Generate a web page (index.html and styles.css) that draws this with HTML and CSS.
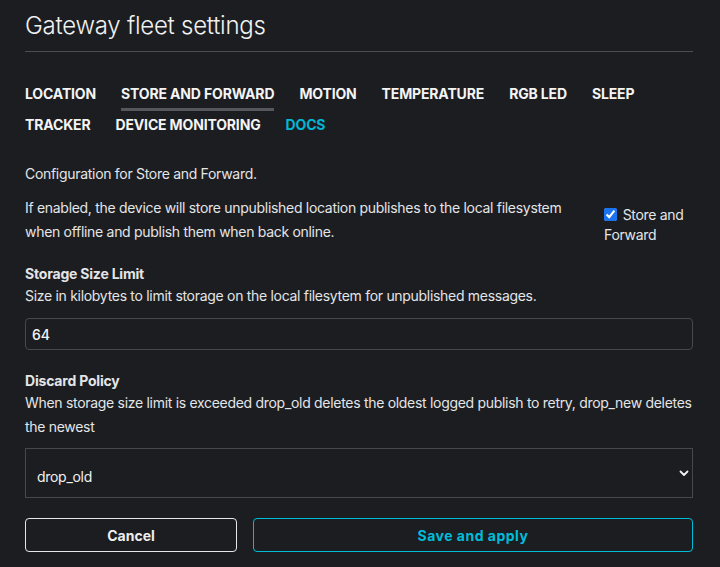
FILE: index.html
```html
<!DOCTYPE html>
<html lang="en">
<head>
<meta charset="utf-8">
<title>Gateway fleet settings</title>
<link rel="stylesheet" href="styles.css">
</head>
<body>
<div class="page">
  <h1 class="title">Gateway fleet settings</h1>
  <hr class="rule">
  <nav class="tabs">
    <span class="tab">Location</span>
    <span class="tab active">Store and Forward</span>
    <span class="tab">Motion</span>
    <span class="tab">Temperature</span>
    <span class="tab">RGB LED</span>
    <span class="tab">Sleep</span>
    <span class="tab">Tracker</span>
    <span class="tab">Device Monitoring</span>
    <span class="tab docs">Docs</span>
  </nav>
  <p class="intro">Configuration for Store and Forward.</p>
  <div class="enable-row">
    <p class="enable-text">If enabled, the device will store unpublished location publishes to the local filesystem when offline and publish them when back online.</p>
    <label class="check"><input type="checkbox" checked> Store and Forward</label>
  </div>
  <div class="field">
    <div class="field-label">Storage Size Limit</div>
    <div class="field-desc">Size in kilobytes to limit storage on the local filesytem for unpublished messages.</div>
    <input class="text-input" type="text" value="64">
  </div>
  <div class="field">
    <div class="field-label">Discard Policy</div>
    <div class="field-desc">When storage size limit is exceeded drop_old deletes the oldest logged publish to retry, drop_new deletes the newest</div>
    <div class="select-wrap">
      <select class="select">
        <option>drop_old</option>
        <option>drop_new</option>
      </select>
      <svg class="chevron" width="10" height="7" viewBox="0 0 10 7"><path d="M1.5 1.5 L5 5 L8.5 1.5" fill="none" stroke="#f2f2f2" stroke-width="1.8" stroke-linecap="round" stroke-linejoin="round"/></svg>
    </div>
  </div>
  <div class="actions">
    <button class="btn btn-cancel">Cancel</button>
    <button class="btn btn-save">Save and apply</button>
  </div>
</div>
</body>
</html>
```
FILE: styles.css
```css
html, body {
  margin: 0;
  padding: 0;
  background: #1b1d21;
}
body {
  font-family: Inter, "Liberation Sans", sans-serif;
  color: #e4e5e7;
  font-size: 14px;
  letter-spacing: -0.3px;
}
.page {
  padding: 10px 27px 0 25px;
}
.title {
  margin: 0;
  font-size: 24px;
  line-height: 32px;
  font-weight: 300;
  letter-spacing: -0.25px;
  color: #f1f1f2;
}
.rule {
  margin: 9px 0 0;
  border: 0;
  border-top: 1px solid #4b4d52;
}
.tabs {
  display: flex;
  flex-wrap: wrap;
  column-gap: 25px;
  row-gap: 4px;
  margin-top: 32px;
}
.tab {
  font-size: 14px;
  font-weight: 700;
  letter-spacing: -0.15px;
  text-transform: uppercase;
  line-height: 20px;
  padding-bottom: 4px;
  border-bottom: 3px solid transparent;
  color: #f4f4f5;
}
.tab.active {
  border-bottom-color: #55575d;
}
.tab.docs {
  color: #00b8d4;
}
.intro {
  margin: 20px 0 0;
  line-height: 24px;
}
.enable-row {
  display: flex;
  gap: 22px;
  margin-top: 10px;
}
.enable-text {
  flex: 1;
  margin: 0;
  line-height: 24px;
}
.check {
  width: 89px;
  flex: none;
  line-height: 20px;
  margin-top: 9px;
}
.check input {
  width: 13px;
  height: 13px;
  margin: 0 2px 0 0;
  vertical-align: -1px;
  accent-color: #1a73f0;
}
.field {
  margin-top: 19px;
}
.field + .field {
  margin-top: 21px;
}
.field-label {
  font-weight: 700;
  letter-spacing: -0.2px;
  line-height: 20px;
}
.field-desc {
  line-height: 24px;
}
.text-input {
  display: block;
  box-sizing: border-box;
  width: 100%;
  height: 32px;
  margin-top: 10px;
  padding: 0 6px;
  background: #1b1d21;
  border: 1px solid #46484e;
  border-radius: 4px;
  color: #f4f4f5;
  font: 500 14px Inter, "Liberation Sans", sans-serif;
}
.select-wrap {
  position: relative;
  margin-top: 9px;
}
.select {
  display: block;
  box-sizing: border-box;
  width: 100%;
  height: 50px;
  padding: 6px 11px 0;
  appearance: none;
  -webkit-appearance: none;
  background: #1b1d21;
  border: 1px solid #46484e;
  border-radius: 0;
  color: #f1f1f2;
  font: 400 14px Inter, "Liberation Sans", sans-serif;
  letter-spacing: -0.3px;
}
.chevron {
  position: absolute;
  right: 4px;
  top: 22px;
  pointer-events: none;
}
.actions {
  display: grid;
  grid-template-columns: 212px 1fr;
  gap: 16px;
  margin-top: 20px;
}
.btn {
  height: 34px;
  background: transparent;
  border-radius: 4px;
  font: 700 14px Inter, "Liberation Sans", sans-serif;
  cursor: pointer;
}
.btn-cancel {
  border: 1px solid #e6e6e8;
  color: #eeeeef;
}
.btn-save {
  border: 1px solid #00bcd9;
  color: #00bcd9;
  letter-spacing: 0.5px;
}
```
